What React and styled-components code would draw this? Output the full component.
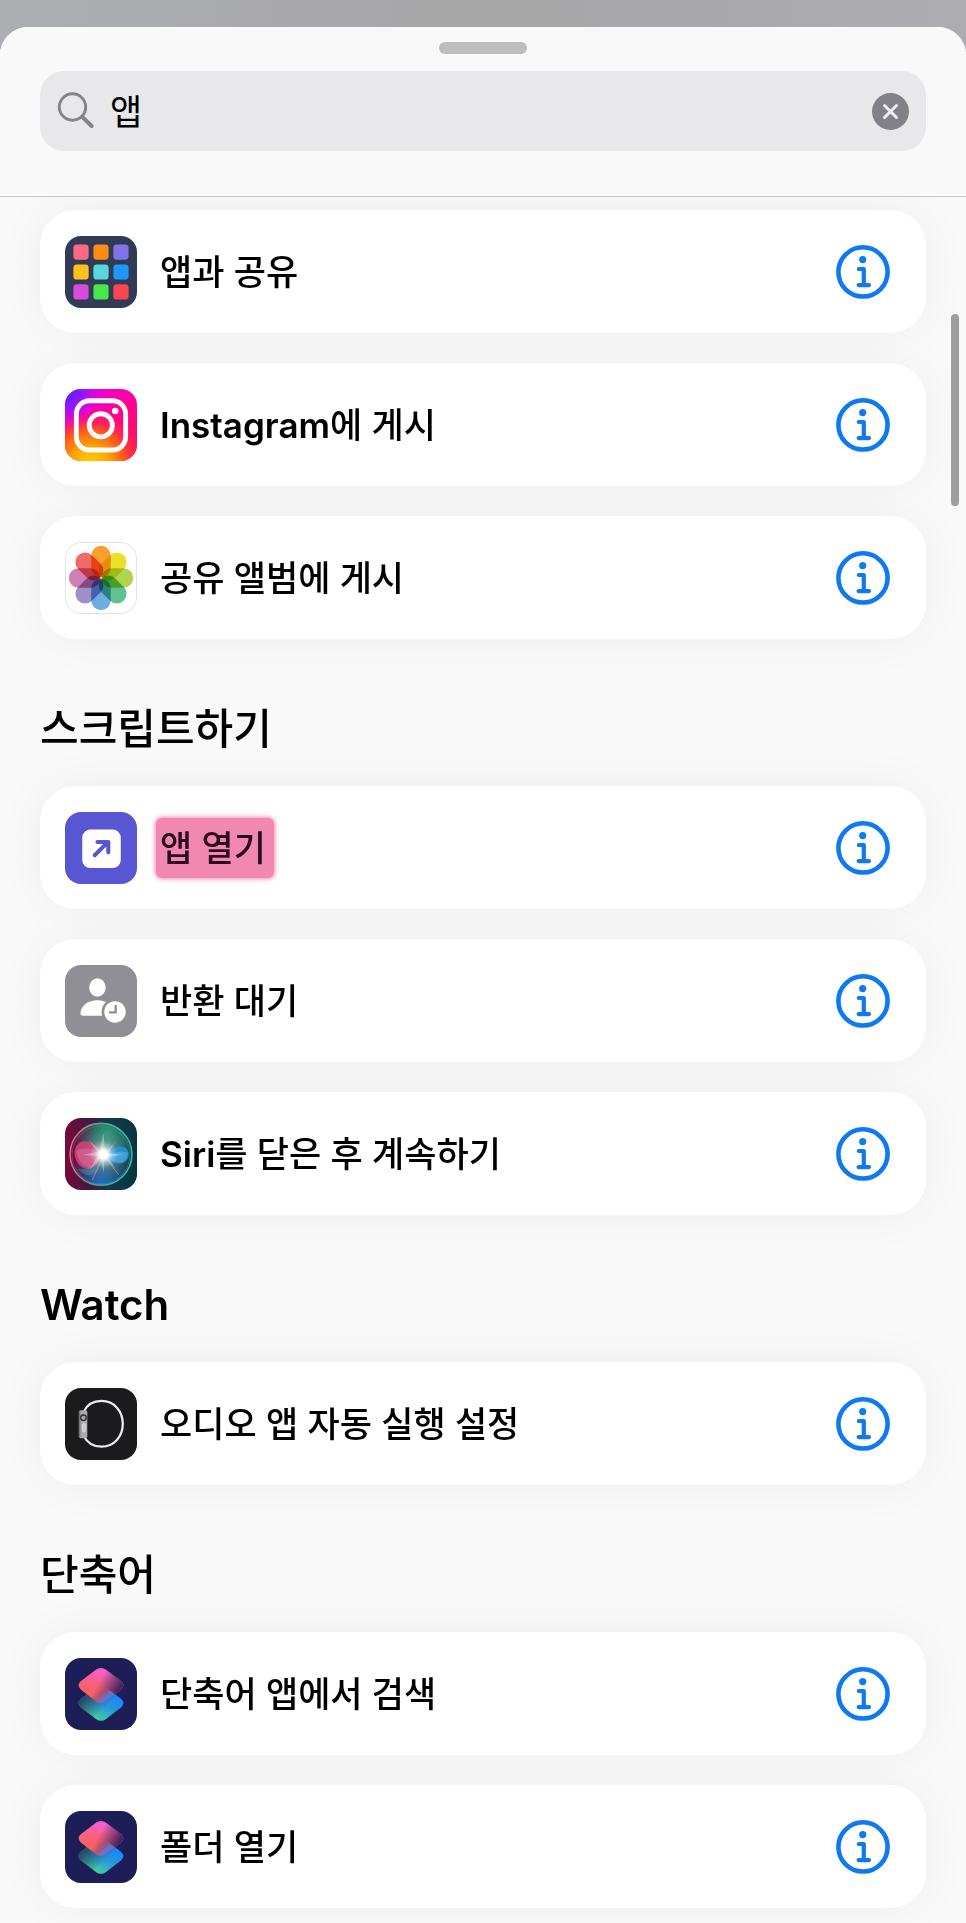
import React, { useState } from 'react'
import styled, { createGlobalStyle, css } from 'styled-components'

const GlobalStyle = createGlobalStyle`
    * {
        box-sizing: border-box;
    }

    body {
        margin: 0;
        color: #000;
        background: #f9f9f9;
        font-family: Inter, "Noto Sans CJK KR", sans-serif;
    }

    button,
    input {
        font: inherit;
        color: inherit;
    }
`

const Backdrop = styled.div`
    min-height: 100vh;
    padding-top: 27px;
    background: linear-gradient(to right, #adaeb2, #a6a6a7 50%, #adadb1);
`

const Sheet = styled.main`
    position: relative;
    min-height: calc(100vh - 27px);
    border-radius: 28px 28px 0 0;
    background: #f9f9f9;
    overflow: hidden;
`

const Header = styled.header`
    position: relative;
    z-index: 1;
    padding: 15px 40px 45px;
    border-bottom: 1px solid #c8c8ca;
    background: #f9f9f9;
`

const Handle = styled.div`
    width: 88px;
    height: 12px;
    margin: 0 auto 17px;
    border-radius: 6px;
    background: #bdbdbf;
`

const SearchField = styled.label`
    display: flex;
    align-items: center;
    gap: 15px;
    height: 80px;
    padding: 0 17px;
    border-radius: 24px;
    background: #e8e8ea;
`

const SearchInput = styled.input`
    flex: 1;
    min-width: 0;
    height: 48px;
    padding: 0 0 4px;
    border: 0;
    outline: 0;
    background: none;
    font-family: "Noto Sans CJK KR", sans-serif;
    font-size: 35px;
    font-weight: 400;
`

const IconButton = styled.button`
    display: flex;
    flex: none;
    padding: 0;
    border: 0;
    background: none;
    cursor: pointer;
`

const Content = styled.div`
    isolation: isolate;
    padding: 13px 40px 16px;
`

const SectionTitle = styled.h2`
    margin: 66px 0 33px;
    font-size: 42px;
    font-weight: 500;
    line-height: 48px;
`

const List = styled.ul`
    display: flex;
    flex-direction: column;
    gap: 30px;
    margin: 0;
    padding: 0;
    list-style: none;
`

const Card = styled.li`
    position: relative;
    display: flex;
    align-items: center;
    height: 123px;
    padding-right: 36px;
    border-radius: 36px;
    background: #fff;

    /* the shadow stays behind neighbouring cards */
    &::before {
        content: '';
        position: absolute;
        inset: 0;
        z-index: -1;
        border-radius: inherit;
        box-shadow: 0 0 48px rgba(0, 0, 0, 0.05);
    }
`

const ActionButton = styled.button`
    display: flex;
    flex: 1;
    align-items: center;
    gap: 23px;
    align-self: stretch;
    min-width: 0;
    padding: 0 0 0 25px;
    border: 0;
    background: none;
    font-size: 35px;
    font-weight: 500;
    line-height: 48px;
    text-align: left;
    cursor: pointer;
`

const ActionLabel = styled.span`
    ${props => props.$marked && css`
        margin: 0 -4px;
        padding: 6px 8px 6px 4px;
        border-radius: 6px;
        color: #2c0a1d;
        background: #f088b0;
        box-shadow: 0 0 4px 1px #f088b0;
    `}
`

const Latin = styled.span`
    font-weight: 600;
`

const AppIcon = styled.svg`
    flex: none;
    width: 72px;
    height: 72px;
    border-radius: 16px;
`

const ScrollThumb = styled.div`
    position: absolute;
    z-index: 2;
    top: 287px;
    right: 7px;
    width: 8px;
    height: 192px;
    border-radius: 4px;
    background: #9e9e9f;
`

const SearchIcon = () => (
    <svg width="38" height="38" viewBox="0 0 38 38" fill="none" stroke="#848488" strokeLinecap="round" aria-hidden="true">
        <circle cx="15.5" cy="15" r="13.2" strokeWidth="2.9"/>
        <path d="M25.3 24.8 34.6 34" strokeWidth="4"/>
    </svg>
)

const ClearIcon = () => (
    <svg width="37" height="37" viewBox="0 0 37 37" aria-hidden="true">
        <circle cx="18.5" cy="18.5" r="18.5" fill="#828187"/>
        <path d="m12.5 12.5 12 12m0-12-12 12" stroke="#efeff1" strokeWidth="3" strokeLinecap="round"/>
    </svg>
)

const InfoIcon = () => (
    <svg width="54" height="54" viewBox="0 0 54 54" fill="none" stroke="#0f7af0" aria-hidden="true">
        <circle cx="27" cy="26.9" r="24.6" strokeWidth="4.6"/>
        <circle cx="26.7" cy="14.6" r="3.6" fill="#0f7af0" stroke="none"/>
        <path d="M22.8 24h5v16M22.6 40.1h10.4" strokeWidth="4.2" strokeLinecap="round" strokeLinejoin="round"/>
    </svg>
)

const gridColors = [
    '#ff6a80', '#ff8c12', '#8074e8',
    '#fdc21e', '#58d6dd', '#1e97fb',
    '#d94bdb', '#48e74b', '#fc4552',
]

const GridIcon = () => (
    <AppIcon viewBox="0 0 71 71" aria-hidden="true">
        <path fill="#313b56" d="M0 0h71v71H0z"/>
        {gridColors.map((color, i) => (
            <rect
                key={color}
                x={8.3 + (i % 3) * 19.7}
                y={8.3 + Math.floor(i / 3) * 19.7}
                width="15"
                height="15"
                rx="3.4"
                fill={color}
            />
        ))}
    </AppIcon>
)

const InstagramIcon = () => (
    <AppIcon viewBox="0 0 71 71" aria-hidden="true">
        <defs>
            <linearGradient id="ig-base" x1="0.2" y1="0" x2="0.8" y2="1">
                <stop offset="0" stopColor="#e800e8"/>
                <stop offset="0.45" stopColor="#ff0095"/>
                <stop offset="1" stopColor="#ff1a50"/>
            </linearGradient>
            <radialGradient id="ig-blue" cx="0" cy="0" r="0.55">
                <stop offset="0" stopColor="#4a20ff"/>
                <stop offset="0.45" stopColor="#8c18ff"/>
                <stop offset="1" stopColor="#e800e8" stopOpacity="0"/>
            </radialGradient>
            <radialGradient id="ig-yellow" cx="0.35" cy="1.05" r="0.8">
                <stop offset="0" stopColor="#ffd000"/>
                <stop offset="0.3" stopColor="#ffac00"/>
                <stop offset="0.6" stopColor="#ff5a1c"/>
                <stop offset="1" stopColor="#ff0070" stopOpacity="0"/>
            </radialGradient>
        </defs>
        <path fill="url(#ig-base)" d="M0 0h71v71H0z"/>
        <path fill="url(#ig-yellow)" d="M0 0h71v71H0z"/>
        <path fill="url(#ig-blue)" d="M0 0h71v71H0z"/>
        <g fill="none" stroke="#fff" strokeWidth="4.8">
            <rect x="11.2" y="11.6" width="48.6" height="48.6" rx="13"/>
            <circle cx="35.3" cy="35.8" r="11.4"/>
        </g>
        <circle cx="49.5" cy="21.6" r="3.2" fill="#fff"/>
    </AppIcon>
)

const petalColors = [
    '#f9a02e', '#ebdf2c', '#b0d44f', '#62c191',
    '#6facdf', '#a08fc5', '#d081b2', '#ee6b67',
]

const PhotosIcon = () => (
    <AppIcon viewBox="0 0 71 71" aria-hidden="true">
        <rect x="0.5" y="0.5" width="70" height="70" rx="15.5" fill="#fff" stroke="#e2e2e3"/>
        {petalColors.map((color, i) => (
            <rect
                key={color}
                x="25.9"
                y="3.8"
                width="19.2"
                height="31"
                rx="9.5"
                fill={color}
                transform={`rotate(${i * 45} 35.5 35.5)`}
                style={{ mixBlendMode: 'multiply' }}
            />
        ))}
    </AppIcon>
)

const OpenAppIcon = () => (
    <AppIcon viewBox="0 0 71 71" aria-hidden="true">
        <path fill="#5956d3" d="M0 0h71v71H0z"/>
        <rect x="17" y="17.3" width="38" height="38" rx="8" fill="#fff"/>
        <path
            d="M29.3 42.6 42 30M32 29.5h10.7v10.3"
            fill="none"
            stroke="#5956d3"
            strokeWidth="4"
            strokeLinecap="round"
            strokeLinejoin="round"
        />
    </AppIcon>
)

const WaitIcon = () => (
    <AppIcon viewBox="0 0 71 71" aria-hidden="true">
        <path fill="#908f96" d="M0 0h71v71H0z"/>
        <ellipse cx="32" cy="22.2" rx="8.1" ry="9.1" fill="#fff"/>
        <path fill="#fff" d="M18 50c-2 0-3-1-2.8-3C16 40 23 34.8 32 34.8c9 0 16 5.2 17 12.2.1 2-1 3-3 3z"/>
        <circle cx="49.3" cy="46.3" r="13.2" fill="#908f96"/>
        <circle cx="49.3" cy="46.3" r="10.6" fill="#fff"/>
        <path d="M50 40.3v6.4h-5.7" fill="none" stroke="#908f96" strokeWidth="2.3" strokeLinecap="round"/>
    </AppIcon>
)

const SiriIcon = () => (
    <AppIcon viewBox="0 0 71 71" aria-hidden="true">
        <defs>
            <linearGradient id="siri-base" x1="0" y1="0.5" x2="1" y2="0.5">
                <stop offset="0" stopColor="#760a3a"/>
                <stop offset="0.35" stopColor="#44183f"/>
                <stop offset="0.6" stopColor="#123a48"/>
                <stop offset="1" stopColor="#06363f"/>
            </linearGradient>
            <linearGradient id="siri-ring" x1="0" y1="0.4" x2="1" y2="0.6">
                <stop offset="0" stopColor="#ee6a90"/>
                <stop offset="0.4" stopColor="#59a08d"/>
                <stop offset="1" stopColor="#35bcb4"/>
            </linearGradient>
            <radialGradient id="siri-green" cx="0.6" cy="0.15" r="0.55">
                <stop offset="0" stopColor="#1d9a72"/>
                <stop offset="1" stopColor="#1d8a6c" stopOpacity="0"/>
            </radialGradient>
            <radialGradient id="siri-blue" cx="0.5" cy="1" r="0.55">
                <stop offset="0" stopColor="#1470d8"/>
                <stop offset="1" stopColor="#1458a8" stopOpacity="0"/>
            </radialGradient>
            <radialGradient id="siri-haze" cx="0.54" cy="0.5" r="0.5">
                <stop offset="0" stopColor="#b9d3cf" stopOpacity="0.8"/>
                <stop offset="1" stopColor="#5f8d8d" stopOpacity="0"/>
            </radialGradient>
            <radialGradient id="siri-glow">
                <stop offset="0" stopColor="#fff"/>
                <stop offset="0.3" stopColor="#fff" stopOpacity="0.95"/>
                <stop offset="0.6" stopColor="#e4f4f4" stopOpacity="0.4"/>
                <stop offset="1" stopColor="#cfe6e6" stopOpacity="0"/>
            </radialGradient>
        </defs>
        <path fill="url(#siri-base)" d="M0 0h71v71H0z"/>
        <circle cx="35.5" cy="35.8" r="30.5" fill="url(#siri-green)"/>
        <circle cx="35.5" cy="35.8" r="30.5" fill="url(#siri-blue)"/>
        <circle cx="35.5" cy="35.8" r="30.5" fill="url(#siri-haze)"/>
        <path fill="#e5407c" fillOpacity="0.8" d="M38 37c-4-8-12-14-20-14-7 1-10 9-8 16 2 7 8 12 14 11 6-1 10-7 14-13z"/>
        <path fill="#d07aa4" fillOpacity="0.5" d="M38 37c-8-7-19-9-27-5 1 9 7 17 14 17 5-1 9-6 13-12z"/>
        <path fill="#2b93e4" fillOpacity="0.8" d="M38 37c6-5 12-10 18-9 7 1 8 8 6 12-2 5-8 6-13 4-4-1-8-4-11-7z"/>
        <path fill="#62c8e4" fillOpacity="0.4" d="M38 37c8-2 17-5 24-3 0 6-4 10-8 10-6 0-11-4-16-7z"/>
        <path fill="#58b8c4" fillOpacity="0.3" d="M38 37c-9 11-18 15-26 13 7 7 13 8 18 4 4-4 6-10 8-17z"/>
        <path d="m38 37 15 19M38 37 27 61" stroke="#d79ab4" strokeOpacity="0.6" strokeWidth="1"/>
        <g fill="#fff" fillOpacity="0.75">
            <path d="m38 15 1.6 20L51 22l-9 13 16 1-16 2.500 8 12-11-11-1 15-2.500-15-11 11 7.500-13-15-1 15-3-9-12 11.500 10z" opacity="0.45"/>
        </g>
        <circle cx="38" cy="36" r="14" fill="url(#siri-glow)"/>
        <circle cx="35.5" cy="35.8" r="30.5" fill="none" stroke="url(#siri-ring)" strokeWidth="1.5"/>
        <circle cx="35.5" cy="36.5" r="28.5" fill="none" stroke="url(#siri-ring)" strokeOpacity="0.35"/>
    </AppIcon>
)

const WatchIcon = () => (
    <AppIcon viewBox="0 0 71 71" aria-hidden="true">
        <path fill="#1b1b1d" d="M0 0h71v71H0z"/>
        <path
            d="M18.5 23.5C22 16 28.5 12.8 36 12.8c12.5 0 21 10 21 22.5s-8.5 22.5-21 22.5c-7.5 0-14-3.5-17.5-10.5"
            fill="none"
            stroke="#ececec"
            strokeWidth="2.2"
            strokeLinecap="round"
        />
        <rect x="13.7" y="22" width="8.3" height="27.5" rx="1.8" fill="#aaaaab"/>
        <rect x="13.7" y="23" width="1.5" height="25.5" rx="0.7" fill="#777778"/>
        <circle cx="18.2" cy="29.3" r="2.7" fill="#aaaaab" stroke="#303032" strokeWidth="1.3"/>
        <rect x="17.2" y="35" width="3" height="8.5" rx="1.5" fill="#c8c8c9" stroke="#e4e4e5" strokeWidth="0.7"/>
    </AppIcon>
)

const ShortcutsIcon = () => (
    <AppIcon viewBox="0 0 71 71" aria-hidden="true">
        <defs>
            <linearGradient id="sc-pink" x1="0.6" y1="0" x2="0.35" y2="0.9">
                <stop offset="0" stopColor="#f55ee0"/>
                <stop offset="0.55" stopColor="#f9617c"/>
                <stop offset="1" stopColor="#fb6154"/>
            </linearGradient>
            <linearGradient id="sc-top" x1="0.5" y1="0.3" x2="0.95" y2="0.5">
                <stop offset="0" stopColor="#45245f" stopOpacity="0"/>
                <stop offset="1" stopColor="#45245f"/>
            </linearGradient>
            <linearGradient id="sc-blue" x1="0.85" y1="0.3" x2="0.4" y2="1">
                <stop offset="0" stopColor="#1687ff"/>
                <stop offset="0.45" stopColor="#2a96dc"/>
                <stop offset="1" stopColor="#45d69a"/>
            </linearGradient>
            <linearGradient id="sc-bottom" x1="0.05" y1="0.4" x2="0.5" y2="0.75">
                <stop offset="0" stopColor="#27455f"/>
                <stop offset="1" stopColor="#27455f" stopOpacity="0"/>
            </linearGradient>
            <linearGradient id="sc-fold" x1="0.5" y1="0.15" x2="0.78" y2="0.4">
                <stop offset="0" stopColor="#a65c9c" stopOpacity="0"/>
                <stop offset="0.5" stopColor="#6f78d0" stopOpacity="0.85"/>
                <stop offset="1" stopColor="#2b86f4"/>
            </linearGradient>
            <path id="sc-diamond" d="M30.5 11.600q5-3.700 10 0L55.200 22.800q5 4.200 0 8.400L40.500 42.600q-5 3.700-10 0L15.800 31.200q-5-4.200 0-8.400z"/>
            <clipPath id="sc-clip">
                <use href="#sc-diamond"/>
            </clipPath>
        </defs>
        <path fill="#1d1e58" d="M0 0h71v71H0z"/>
        <use href="#sc-diamond" y="17.5" fill="url(#sc-blue)"/>
        <use href="#sc-diamond" y="17.5" fill="url(#sc-bottom)"/>
        <use href="#sc-diamond" fill="url(#sc-pink)"/>
        <use href="#sc-diamond" fill="url(#sc-top)"/>
        <g clipPath="url(#sc-clip)">
            <use href="#sc-diamond" y="17.5" fill="url(#sc-fold)"/>
        </g>
    </AppIcon>
)

const sections = [
    {
        actions: [
            { label: '앱과 공유', icon: GridIcon },
            { latin: 'Instagram', label: '에 게시', icon: InstagramIcon },
            { label: '공유 앨범에 게시', icon: PhotosIcon },
        ],
    },
    {
        title: '스크립트하기',
        actions: [
            { label: '앱 열기', icon: OpenAppIcon, marked: true },
            { label: '반환 대기', icon: WaitIcon },
            { latin: 'Siri', label: '를 닫은 후 계속하기', icon: SiriIcon },
        ],
    },
    {
        title: <Latin>Watch</Latin>,
        actions: [
            { label: '오디오 앱 자동 실행 설정', icon: WatchIcon },
        ],
    },
    {
        title: '단축어',
        actions: [
            { label: '단축어 앱에서 검색', icon: ShortcutsIcon },
            { label: '폴더 열기', icon: ShortcutsIcon },
        ],
    },
]

const Action = ({ latin = '', label, icon: Icon, marked }) => (
    <Card>
        <ActionButton type="button">
            <Icon/>
            <ActionLabel $marked={marked}>
                {latin && <Latin>{latin}</Latin>}
                {label}
            </ActionLabel>
        </ActionButton>
        <IconButton type="button" aria-label={`${latin}${label} 정보`}>
            <InfoIcon/>
        </IconButton>
    </Card>
)

const App = () => {
    const [query, setQuery] = useState('앱')

    return (
        <Backdrop>
            <GlobalStyle/>
            <Sheet>
                <Header>
                    <Handle/>
                    <SearchField>
                        <SearchIcon/>
                        <SearchInput
                            type="text"
                            aria-label="검색"
                            value={query}
                            onChange={e => setQuery(e.target.value)}
                        />
                        <IconButton type="button" aria-label="지우기" onClick={() => setQuery('')}>
                            <ClearIcon/>
                        </IconButton>
                    </SearchField>
                </Header>
                <Content>
                    {sections.map((section, i) => (
                        <section key={i}>
                            {section.title && <SectionTitle>{section.title}</SectionTitle>}
                            <List>
                                {section.actions.map(action => (
                                    <Action key={action.label} {...action}/>
                                ))}
                            </List>
                        </section>
                    ))}
                </Content>
                <ScrollThumb/>
            </Sheet>
        </Backdrop>
    )
}

export default App
